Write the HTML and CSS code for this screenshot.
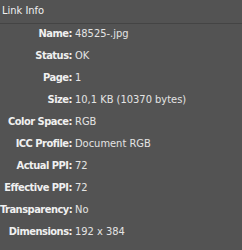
FILE: index.html
```html
<!DOCTYPE html>
<html lang="en">
  <head>
    <meta charset="UTF-8" />
    <meta name="viewport" content="width=device-width, initial-scale=1.0" />
    <title>Link Info</title>
    <link rel="stylesheet" href="styles.css">
  </head>
  <body>
    <div class="panel">
      <div class="panel-header">Link Info</div>

      <div class="info-list">
        <span class="label">Name:</span><span class="value">48525-.jpg</span>
        <span class="label">Status:</span><span class="value">OK</span>
        <span class="label">Page:</span><span class="value">1</span>
        <span class="label">Size:</span><span class="value">10,1 KB (10370 bytes)</span>
        <span class="label">Color Space:</span><span class="value">RGB</span>
        <span class="label">ICC Profile:</span><span class="value">Document RGB</span>
        <span class="label">Actual PPI:</span><span class="value">72</span>
        <span class="label">Effective PPI:</span><span class="value">72</span>
        <span class="label">Transparency:</span><span class="value">No</span>
        <span class="label">Dimensions:</span><span class="value">192 x 384</span>
      </div>
    </div>
  </body>
</html>
```

FILE: styles.css
```css
body {
  margin: 0;
  background-color: #535353;
  font-family: "DejaVu Sans Condensed", "DejaVu Sans", sans-serif;
  font-size: 11px;
  color: #e8e8e8;
}

.panel {
  width: 242px;
  height: 250px;
  overflow: hidden;
}

.panel-header {
  height: 23px;
  line-height: 22px;
  padding-left: 2px;
  border-bottom: 1px solid #444444;
  color: #f0f0f0;
}

.info-list {
  display: grid;
  grid-template-columns: 72px 1fr;
  column-gap: 3px;
  grid-auto-rows: 22px;
  align-items: center;
  margin-top: -2px;
}

.label {
  text-align: right;
  font-weight: bold;
  letter-spacing: -0.5px;
  color: #f0f0f0;
  white-space: nowrap;
}

.value {
  color: #e4e4e4;
  white-space: nowrap;
}
```
